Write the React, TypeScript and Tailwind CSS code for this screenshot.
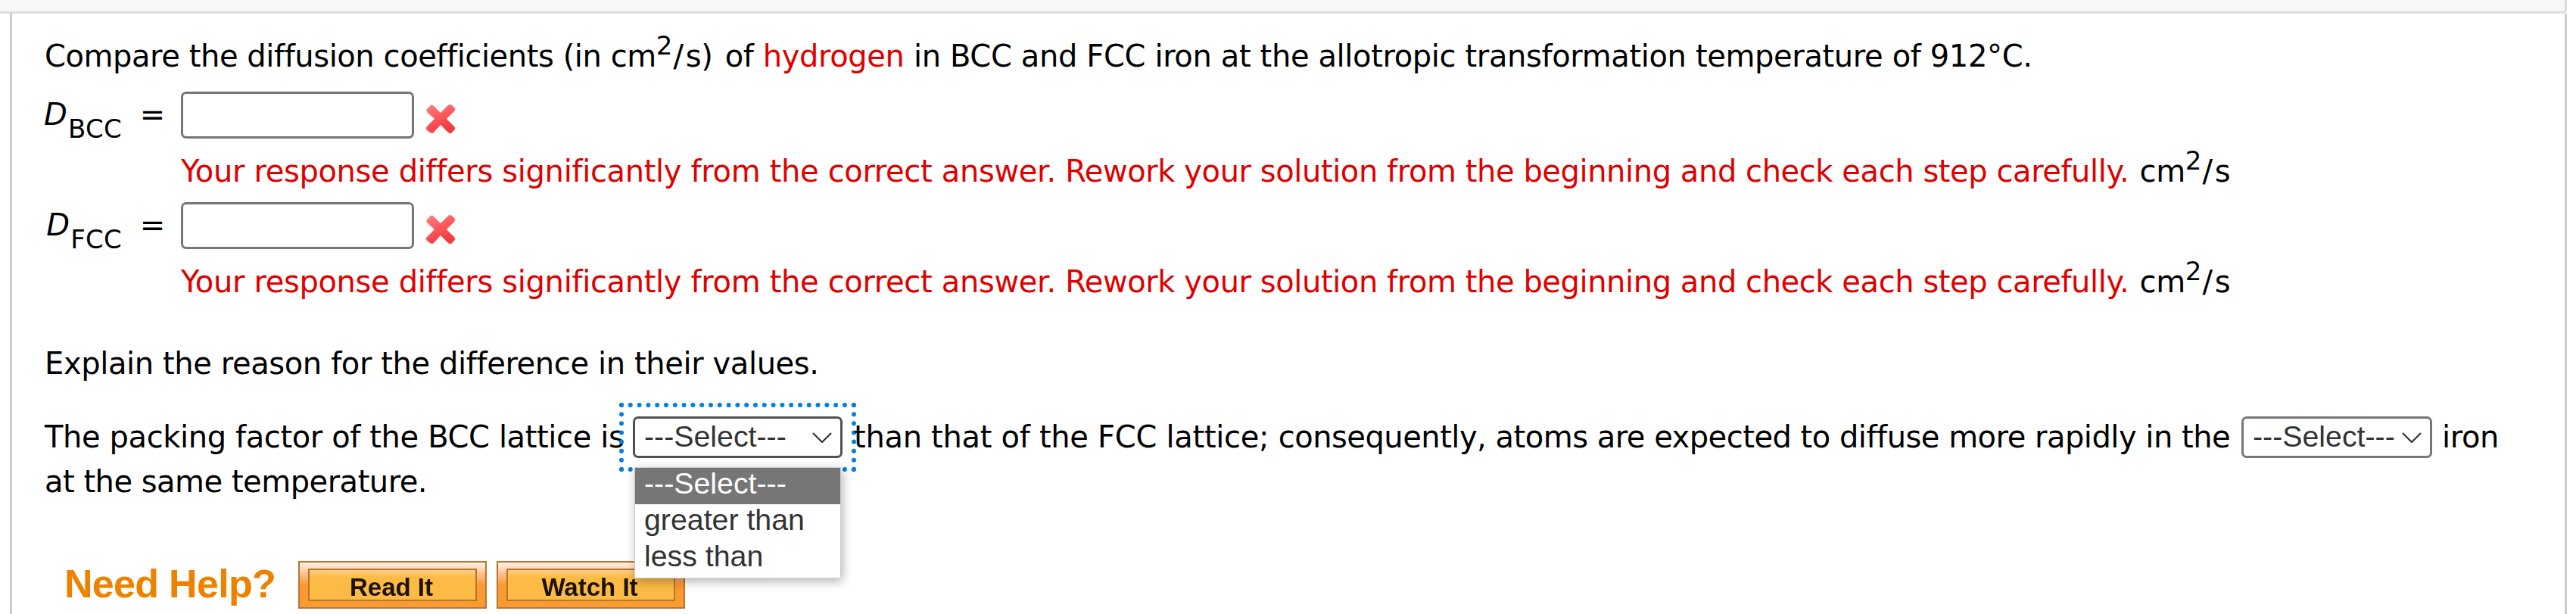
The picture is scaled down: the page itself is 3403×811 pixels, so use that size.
import { ReactNode } from "react";

function Chevron() {
  return (
    <svg className="h-[14px] w-[26px] shrink-0" viewBox="0 0 26 14" fill="none" stroke="#333" strokeWidth="2.2">
      <path d="M1 1 L13 13 L25 1" />
    </svg>
  );
}

function WrongMark() {
  return (
    <svg className="h-[42px] w-[42px] blur-[0.6px]" viewBox="0 0 42 42">
      <defs>
        <linearGradient id="mark" x1="0" y1="0" x2="0.4" y2="1">
          <stop offset="0" stopColor="#ff8080" />
          <stop offset="0.5" stopColor="#fc5a5f" />
          <stop offset="1" stopColor="#ec3c42" />
        </linearGradient>
      </defs>
      <path
        fill="url(#mark)"
        stroke="#ffb0b0"
        strokeWidth="0.8"
        d="M3 8 L8 3 Q10 2 12 4 L21 13 L31 3 Q33 1 36 3 L40 7 Q41 9 39 11 L29 21 L39 31 Q41 33 40 35 L35 40 Q33 41 31 39 L21 29 L12 39 Q10 41 7 39 L2 35 Q1 33 3 31 L13 21 L3 12 Q2 10 3 8 Z"
      />
    </svg>
  );
}

function SquareCmPerSecond() {
  return (
    <>
      cm<span className="relative -top-4 text-[34px] leading-none">2</span>
      <span className="mr-[3.2px] ml-[1.6px]">/</span>s
    </>
  );
}

function AnswerRow({ label }: { label: string }) {
  return (
    <div className="flex h-[146px]">
      <div className="flex w-[181px] shrink-0 justify-end pr-[21px] leading-[60px]">
        <span className="whitespace-nowrap">
          <i className="inline-block w-[32px]">D</i>
          <span className="relative top-[17px] text-[34px] leading-none tracking-[0.2px]">{label}</span>
          <span className="ml-[24px]">=</span>
        </span>
      </div>
      <div>
        <div className="flex h-[62px]">
          <div className="h-[62px] w-[308px] rounded-[7px] border-3 border-[#767676] bg-white" />
          <div className="ml-[14px] pt-[15px]">
            <WrongMark />
          </div>
        </div>
        <div className="mt-[13px] whitespace-nowrap leading-[60px]">
          <span className="text-[#e00000]">
            <span className="tracking-[-0.34px]">Your response differs significantly from the correct answer. </span>
            <span className="tracking-[-0.43px]">Rework your solution from the beginning and check each step carefully.</span>
          </span>{" "}
          <span className="ml-[2px]"><SquareCmPerSecond /></span>
        </div>
      </div>
    </div>
  );
}

function SelectBox({ className, children }: { className: string; children?: ReactNode }) {
  return (
    <div
      className={`relative mt-[3px] flex h-[55px] shrink-0 items-center justify-between rounded-[7px] border-3 pr-[11px] pl-[12px] font-['Liberation_Sans',sans-serif] text-[39.3px] leading-[46px] tracking-normal text-[#333] ${className}`}
    >
      <span className="mt-[-3px]">---Select---</span>
      <Chevron />
      {children}
    </div>
  );
}

function HelpButton({ label }: { label: string }) {
  return (
    <div className="h-[63px] w-[249px] border-2 border-[#b87530] bg-linear-to-b from-[#ffeadb] from-5% via-[#ffc090] via-25% to-[#fb9a30] to-50% px-[11px] py-[8px]">
      <div className="flex h-[43px] items-center justify-center border-2 border-[#b5762b] bg-linear-to-b from-[#fdcf85] to-[#fdbb45] to-25% pt-[5px] pr-[3px] font-['Liberation_Sans',sans-serif] text-[33px] font-bold leading-none tracking-normal text-[#1c1200]">
        <span className="blur-[0.7px]">{label}</span>
      </div>
    </div>
  );
}

export default function App() {
  return (
    <div className="h-[811px] w-[3403px] overflow-hidden bg-white font-['DejaVu_Sans',sans-serif] text-[40px] tracking-[-0.39px] text-black">
      <div className="h-[18px] w-[3391px] rounded-br-[5px] border-r-3 border-b-3 border-[#ddd] bg-[#f7f7f7]" />
      <div className="ml-[13px] h-[793px] w-[3378px] border-x-3 border-[#ccc] pl-[42px]">
        <div className="flex h-[103px] items-start whitespace-nowrap pt-[26px] pl-[1px] leading-[60px]">
          <span className="tracking-[-0.43px]">Compare the diffusion coefficients (in <SquareCmPerSecond /><span className="mr-[4px]">)</span> of <span className="tracking-[-0.37px]"><span className="text-[#e00000]">hydrogen</span> in BCC and FCC iron at the allotropic transformation temperature of 912°C.</span></span>
        </div>
        <AnswerRow label="BCC" />
        <AnswerRow label="FCC" />
        <div className="mt-[37px] pl-[1px] whitespace-nowrap leading-[60px]">Explain the reason for the difference in their values.</div>
        <div className="mt-[37px] flex h-[59px] whitespace-nowrap leading-[60px]">
          <span className="w-[778px] shrink-0 pl-[1px]">The packing factor of the BCC lattice is</span>
          <SelectBox className="w-[277px] border-[#505050]">
            <div className="pointer-events-none absolute -top-[21px] -left-[21px] h-[91px] w-[313px] border-6 border-dotted border-[#0080e0]" />
            <div className="absolute top-[64px] left-[-1px] z-10 h-[147px] w-[273px] rounded-b-[3px] border border-[#ccc] bg-white leading-[41px] shadow-[2px_4px_14px_rgba(0,0,0,0.3)]">
              <div className="h-[48px] bg-[#767676] pl-[12px] text-white">---Select---</div>
              <div className="h-[48px] pl-[12px]">greater than</div>
              <div className="h-[48px] pl-[12px]">less than</div>
            </div>
          </SelectBox>
          <span className="relative ml-[15px] w-[1833px] shrink-0 tracking-[-0.5px]"><span className="tracking-[-0.3px]">than that of the FCC lattice; </span>consequently, atoms are expected to diffuse more rapidly in the</span>
          <SelectBox className="w-[252px] border-[#767676]" />
          <span className="ml-[13px]">iron</span>
        </div>
        <div className="pl-[1px] leading-[60px] tracking-[-0.5px]">at the same temperature.</div>
        <div className="mt-[75px] flex">
          <div className="h-[63px] w-[336px] pl-[27px] font-['Liberation_Sans',sans-serif] text-[52px] font-bold leading-[61px] tracking-[-0.7px] text-[#ed8200] blur-[0.7px]">Need Help?</div>
          <HelpButton label="Read It" />
          <div className="w-[13px]" />
          <HelpButton label="Watch It" />
        </div>
      </div>
    </div>
  );
}
